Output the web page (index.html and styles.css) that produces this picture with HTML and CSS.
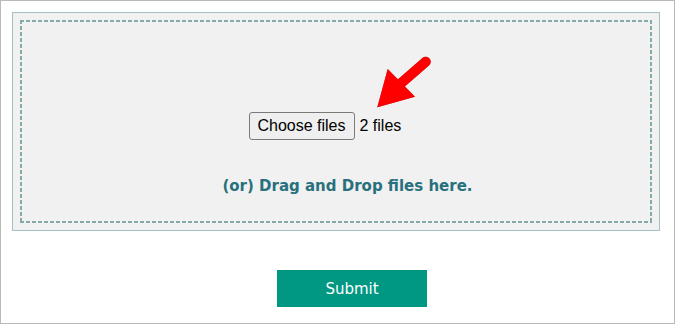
FILE: index.html
```html
<!DOCTYPE html>
<html>
<head>
<meta charset="utf-8">
<link rel="stylesheet" href="styles.css">
</head>
<body>
<div class="frame">
  <div class="box">
    <div class="dropzone">
      <div class="picker">
        <span class="choose-btn">Choose files</span>
        <span class="file-count">2 files</span>
      </div>
      <div class="drop-text">(or) Drag and Drop files here.</div>
    </div>
  </div>
  <div class="actions">
    <button class="submit" type="button">Submit</button>
  </div>
  <svg class="arrow" width="75" height="70" viewBox="0 0 75 70">
    <line x1="60.7" y1="16.7" x2="34" y2="40" stroke="#ff0000" stroke-width="10" stroke-linecap="round"/>
    <polygon points="12.3,62.3 22.7,24 50,51.7" fill="#ff0000"/>
  </svg>
</div>
</body>
</html>
```

FILE: styles.css
```css
html, body {
  margin: 0;
  padding: 0;
  background: #ffffff;
}

.frame {
  position: relative;
  box-sizing: border-box;
  width: 675px;
  height: 324px;
  border: 1px solid #b9b9b9;
  padding: 11px 14px 0 11px;
  font-family: "DejaVu Sans", Verdana, sans-serif;
}

.box {
  box-sizing: border-box;
  height: 219px;
  border: 1px solid #a3c1c3;
  background: #f1f1f1;
  padding: 7px;
}

.dropzone {
  box-sizing: border-box;
  height: 203px;
  padding: 92px 2px 2px 2px;
  display: flex;
  flex-direction: column;
  align-items: center;
  background-image:
    repeating-linear-gradient(to right, #86a9ac 0 4px, transparent 4px 6px),
    repeating-linear-gradient(to right, #86a9ac 0 4px, transparent 4px 6px),
    repeating-linear-gradient(to bottom, #86a9ac 0 4px, transparent 4px 6px),
    repeating-linear-gradient(to bottom, #86a9ac 0 4px, transparent 4px 6px);
  background-size: 100% 2px, 100% 2px, 2px 100%, 2px 100%;
  background-position: left top, left bottom, left top, right top;
  background-repeat: no-repeat;
}

.picker {
  width: 175px;
  display: flex;
  align-items: center;
  font-family: "Liberation Sans", Arial, sans-serif;
  font-size: 16px;
  color: #000;
}

.choose-btn {
  box-sizing: border-box;
  height: 28px;
  width: 106px;
  border: 1px solid #7a7a7a;
  border-radius: 3px;
  background: #efefef;
  display: flex;
  align-items: center;
  justify-content: center;
}

.file-count {
  margin-left: 5px;
}

.drop-text {
  margin-top: 37px;
  padding-left: 23px;
  font-size: 15px;
  font-weight: bold;
  color: #28707e;
  line-height: 18px;
}

.actions {
  display: flex;
  padding-top: 39px;
  padding-left: 265px;
}

.submit {
  width: 150px;
  height: 37px;
  border: none;
  background: #009882;
  color: #ffffff;
  font-family: "DejaVu Sans", Verdana, sans-serif;
  font-size: 15px;
  padding: 0;
  margin: 0;
}

.arrow {
  position: absolute;
  left: 364px;
  top: 44px;
  filter: drop-shadow(0 0 0.6px rgba(80, 0, 0, 0.6));
}
```
